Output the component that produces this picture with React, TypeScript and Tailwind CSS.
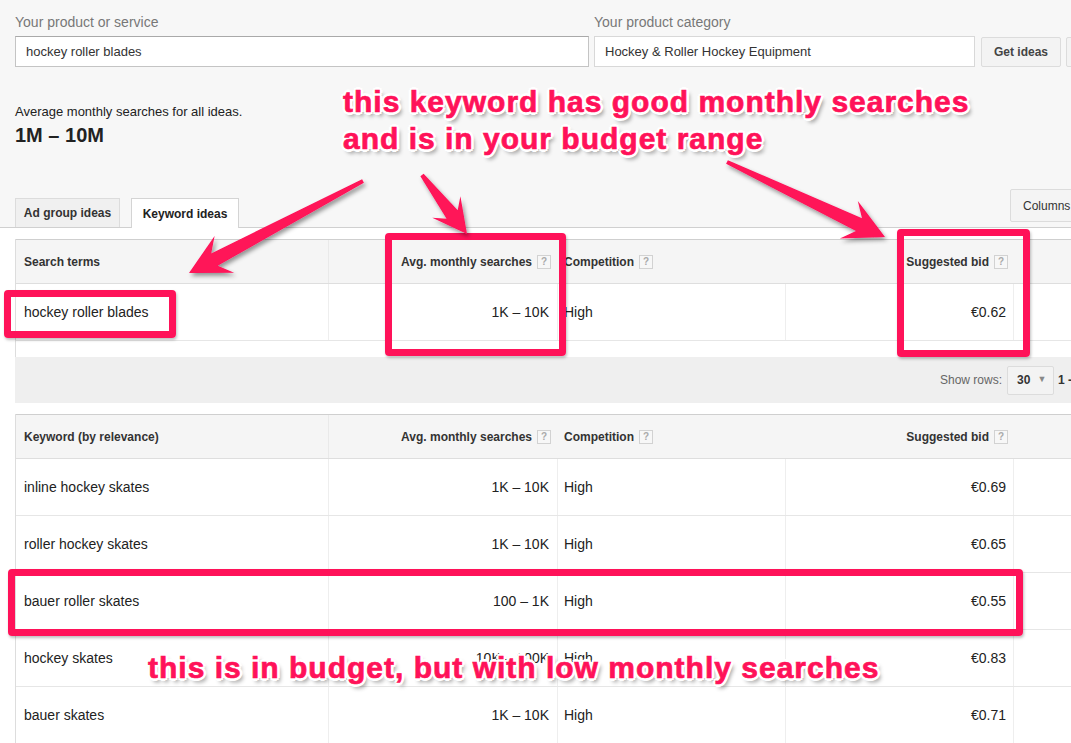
import React from 'react';

type Row = { term: string; avg: string; comp: string; bid: string };

const keywordRows: Row[] = [
  { term: 'inline hockey skates', avg: '1K – 10K', comp: 'High', bid: '€0.69' },
  { term: 'roller hockey skates', avg: '1K – 10K', comp: 'High', bid: '€0.65' },
  { term: 'bauer roller skates', avg: '100 – 1K', comp: 'High', bid: '€0.55' },
  { term: 'hockey skates', avg: '10K – 100K', comp: 'High', bid: '€0.83' },
  { term: 'bauer skates', avg: '1K – 10K', comp: 'High', bid: '€0.71' },
];

const Help = () => (
  <span className="ml-[5px] inline-flex h-[14px] w-[14px] items-center justify-center border border-[#d2d2d2] bg-[#f7f7f7] text-[10px] font-bold leading-none text-[#aaa]">
    ?
  </span>
);

const HeaderRow = ({ first }: { first: string }) => (
  <div className="grid h-[45px] grid-cols-[313px_229px_228px_228px_1fr] border-t border-b border-t-[#cfcfcf] border-b-[#dedede] bg-[#f5f5f5] text-[12px] font-bold text-[#333]">
    <div className="flex items-center border-r border-[#e9e9e9] pl-2">{first}</div>
    <div className="flex items-center justify-end pr-[7px]">
      Avg. monthly searches
      <Help />
    </div>
    <div className="flex items-center pl-[6px]">
      Competition
      <Help />
    </div>
    <div className="flex items-center justify-end pr-[6px]">
      Suggested bid
      <Help />
    </div>
    <div />
  </div>
);

const DataRow = ({ r }: { r: Row }) => (
  <div className="grid h-[57px] grid-cols-[313px_229px_228px_228px_1fr] border-b border-[#e6e6e6] text-[14px] text-[#222]">
    <div className="flex items-center border-r border-[#eeeeee] pl-2">{r.term}</div>
    <div className="flex items-center justify-end border-r border-[#eeeeee] pr-2">{r.avg}</div>
    <div className="flex items-center border-r border-[#eeeeee] pl-[6px]">{r.comp}</div>
    <div className="flex items-center justify-end border-r border-[#eeeeee] pr-[7px]">{r.bid}</div>
    <div />
  </div>
);

// arrow polygon: thin tail, widening shaft, swept head
function arrowPoints(x1: number, y1: number, x2: number, y2: number, head = 38) {
  const dx = x2 - x1;
  const dy = y2 - y1;
  const len = Math.hypot(dx, dy);
  const ux = dx / len;
  const uy = dy / len;
  const nx = -uy;
  const ny = ux;
  const neck = head * 0.72;
  const hw = head * 0.52;
  const t0 = 2;
  const t1 = 7;
  const nxk = x2 - ux * neck;
  const nyk = y2 - uy * neck;
  const bx = x2 - ux * head;
  const by = y2 - uy * head;
  const pts = [
    [x1 + nx * t0, y1 + ny * t0],
    [nxk + nx * t1, nyk + ny * t1],
    [bx + nx * hw, by + ny * hw],
    [x2, y2],
    [bx - nx * hw, by - ny * hw],
    [nxk - nx * t1, nyk - ny * t1],
    [x1 - nx * t0, y1 - ny * t0],
  ];
  return pts.map(p => `${p[0].toFixed(1)},${p[1].toFixed(1)}`).join(' ');
}

const annoText =
  "absolute whitespace-nowrap font-['Liberation_Sans',Arial,sans-serif] text-[30px] font-bold leading-[37px] tracking-[1px] text-[#ff1259] [-webkit-text-stroke:0.7px_#ff1259] [text-shadow:-2px_-2px_0_#fff,2px_-2px_0_#fff,-2px_2px_0_#fff,2px_2px_0_#fff,0_-3px_0_#fff,0_3px_0_#fff,-3px_0_0_#fff,3px_0_0_#fff,3px_4px_4px_rgba(0,0,0,0.45)]";

const App: React.FC = () => {
  return (
    <div className="relative h-[743px] w-[1071px] overflow-hidden bg-white font-['Liberation_Sans',Arial,sans-serif]">
      {/* Top search area */}
      <div className="bg-[#f7f7f7]">
        <div className="flex items-end pl-[15px] pt-[13px]">
          <div className="w-[574px] shrink-0">
            <div className="mb-[5px] text-[14px] leading-[18px] text-[#777]">Your product or service</div>
            <div className="flex h-[31px] items-center border border-[#c4c4c4] border-t-[#a9a9a9] bg-white pl-[10px] text-[13px] text-[#333]">
              hockey roller blades
            </div>
          </div>
          <div className="ml-[5px] w-[381px] shrink-0">
            <div className="mb-[5px] text-[14px] leading-[18px] text-[#777]">Your product category</div>
            <div className="flex h-[31px] items-center border border-[#d8d8d8] bg-white pl-[10px] text-[13px] text-[#333]">
              Hockey &amp; Roller Hockey Equipment
            </div>
          </div>
          <button className="ml-[6px] h-[30px] w-[80px] shrink-0 rounded-[2px] border border-[#dcdcdc] bg-[#f3f3f3] text-[12px] font-bold text-[#444]">
            Get ideas
          </button>
          <button className="ml-[5px] h-[30px] w-[60px] shrink-0 rounded-[2px] border border-[#dcdcdc] bg-[#f3f3f3]" />
        </div>

        <div className="pl-[15px] pt-[37px]">
          <div className="text-[13px] leading-[16px] text-[#222]">Average monthly searches for all ideas.</div>
          <div className="mt-[4px] text-[20px] font-bold leading-[23px] text-[#222]">1M – 10M</div>
        </div>

        {/* Tabs */}
        <div className="flex h-[81px] items-end border-b border-[#d0d0d0] pl-[15px]">
          <div className="flex h-[29px] w-[105px] items-center justify-center border border-b-0 border-[#dcdcdc] bg-[#f0f0f0] text-[12px] font-bold text-[#333]">
            Ad group ideas
          </div>
          <div className="relative -mb-px ml-[11px] flex h-[30px] w-[108px] items-center justify-center border border-b-0 border-[#d4d4d4] bg-white text-[12px] font-bold text-[#222]">
            Keyword ideas
          </div>
          <button className="mr-[-29px] mb-[5px] ml-auto h-[33px] w-[90px] shrink-0 self-end rounded-[2px] border border-[#dcdcdc] bg-[#f4f4f4] pl-[12px] text-left text-[12px] text-[#333]">
            Columns
          </button>
        </div>
      </div>

      {/* Search terms table */}
      <div className="ml-[15px] mt-[11px] w-[1150px]">
        <div className="border-l border-[#dddddd]">
          <HeaderRow first="Search terms" />
          <DataRow r={{ term: 'hockey roller blades', avg: '1K – 10K', comp: 'High', bid: '€0.62' }} />
          <div className="h-[16px]" />
        </div>

        {/* pagination bar */}
        <div className="flex h-[46px] items-center bg-[#efefef] pl-[925px] text-[12px]">
          <span className="text-[#666]">Show rows:</span>
          <div className="ml-[5px] flex h-[29px] w-[47px] items-center rounded-[2px] border border-[#dcdcdc] bg-[#f3f3f3] pl-[9px]">
            <span className="font-bold text-[#333]">30</span>
            <span className="ml-[7px] text-[9px] text-[#888]">▼</span>
          </div>
          <span className="ml-[4px] font-bold text-[#333]">1 - 30 of 801</span>
        </div>

        {/* Keyword ideas table */}
        <div className="mt-[11px] border-l border-[#dddddd]">
          <HeaderRow first="Keyword (by relevance)" />
          {keywordRows.map(r => (
            <DataRow key={r.term} r={r} />
          ))}
        </div>
      </div>

      {/* Annotation overlay */}
      <div className="absolute left-[4px] top-[290px] h-[48px] w-[172px] rounded-[4px] border-[7px] border-[#ff1259] shadow-[1px_2px_3px_rgba(0,0,0,0.25)]" />
      <div className="absolute left-[385px] top-[233px] h-[123px] w-[181px] rounded-[4px] border-[7px] border-[#ff1259] shadow-[1px_2px_3px_rgba(0,0,0,0.25)]" />
      <div className="absolute left-[897px] top-[229px] h-[128px] w-[133px] rounded-[4px] border-[7px] border-[#ff1259] shadow-[1px_2px_3px_rgba(0,0,0,0.25)]" />
      <div className="absolute left-[8px] top-[569px] h-[67px] w-[1015px] rounded-[4px] border-[7px] border-[#ff1259] shadow-[1px_2px_3px_rgba(0,0,0,0.25)]" />

      <svg className="pointer-events-none absolute left-0 top-0" width={1071} height={743}>
        <defs>
          <filter id="ash" x="-20%" y="-20%" width="140%" height="140%">
            <feDropShadow dx="2" dy="3" stdDeviation="2" floodColor="#000" floodOpacity="0.4" />
          </filter>
        </defs>
        <g fill="#ff1259" filter="url(#ash)">
          <polygon points={arrowPoints(363, 181, 189, 273, 40)} />
          <polygon points={arrowPoints(422, 175, 467, 234, 34)} />
          <polygon points={arrowPoints(727, 162, 885, 237, 40)} />
        </g>
      </svg>

      <div className={`${annoText} left-[343px] top-[83px]`}>
        this keyword has good monthly searches
        <br />
        and is in your budget range
      </div>
      <div className={`${annoText} left-[148px] top-[649px]`}>this is in budget, but with low monthly searches</div>
    </div>
  );
};

export default App;
